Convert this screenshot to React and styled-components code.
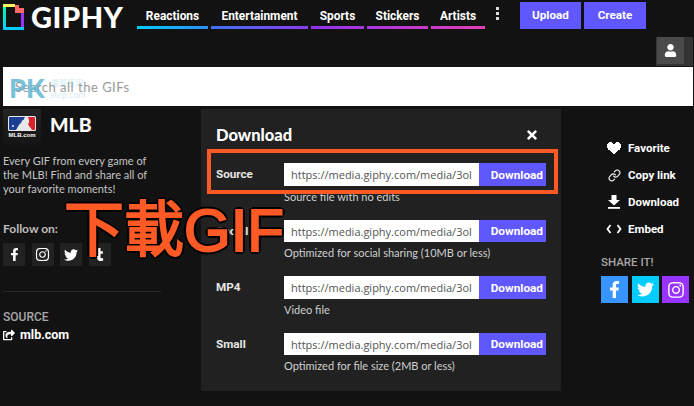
import styled, { createGlobalStyle } from "styled-components";
import { FaFacebookF, FaInstagram, FaTwitter, FaTumblr, FaUser, FaTimes, FaShareSquare } from "react-icons/fa";
import { Link as LinkIcon } from "lucide-react";

const GlobalStyle = createGlobalStyle`
  html, body {
    margin: 0;
    background: #121212;
  }
  * { box-sizing: border-box; }
`;

const navItems = [
  { label: "Reactions", width: 71, bar: "linear-gradient(90deg, #00ccff, #2f8cf5)" },
  { label: "Entertainment", width: 97, bar: "linear-gradient(90deg, #3f73f5, #8a3bf0)" },
  { label: "Sports", width: 53, bar: "linear-gradient(90deg, #8f35ee, #a935e0)" },
  { label: "Stickers", width: 61, bar: "linear-gradient(90deg, #a935e0, #c93acb)" },
  { label: "Artists", width: 54, bar: "linear-gradient(90deg, #c93acb, #e240ae)" },
];

const downloads = [
  { label: "Source", note: "Source file with no edits", height: 57, tall: true },
  { label: "Social", note: "Optimized for social sharing (10MB or less)", height: 56 },
  { label: "MP4", note: "Video file", height: 57, tall: true },
  { label: "Small", note: "Optimized for file size (2MB or less)", height: 56 },
];

const Logo = () => (
  <svg width="21" height="26" viewBox="0 0 21 26">
    <defs>
      <linearGradient id="logoLeft" x1="0" y1="0" x2="0" y2="1">
        <stop offset="0" stopColor="#00ff99" />
        <stop offset="1" stopColor="#00ccff" />
      </linearGradient>
    </defs>
    <rect x="0" y="0" width="3" height="26" fill="url(#logoLeft)" />
    <rect x="0" y="0" width="12" height="3" fill="#fff35c" />
    <rect x="0" y="23" width="21" height="3" fill="#00ccff" />
    <rect x="18" y="9" width="3" height="14" fill="#9933ff" />
    <path d="M12 1h4v3h5v5H12z" fill="#ff6666" />
  </svg>
);

const MlbBadge = () => (
  <svg width="28" height="15" viewBox="0 0 28 15">
    <rect width="28" height="15" rx="1.500" fill="#e8e8e8" />
    <path d="M1 2a1 1 0 0 1 1-1h15c-1 1-1 3-2 3-2 1-1 2-2 3-2 1-3 4-5 7H2a1 1 0 0 1-1-1z" fill="#1c3f94" />
    <path d="M20 1h6a1 1 0 0 1 1 1v11a1 1 0 0 1-1 1h-2c-1-2-4-5-4-6 1-1 2-2 0-7z" fill="#d8232f" />
    <circle cx="5" cy="10" r="0.900" fill="#fff" />
  </svg>
);

const PixelHeart = () => (
  <svg width="14" height="12" viewBox="0 0 14 12" fill="#fff">
    <path d="M2 0h3v1h1v1h2V1h1V0h3v1h1v1h1v4h-1v2h-2v1h-1v1H9v1H8v1H6v-1H5v-1H4V9H3V8H1V6H0V2h1V1h1z" />
  </svg>
);

const DownloadGlyph = () => (
  <svg width="14" height="14" viewBox="0 0 14 14" fill="#fff">
    <path d="M4.500 0h5v5H13L7 10.500 1 5h3.500z" />
    <rect x="1" y="12" width="12" height="1.800" />
  </svg>
);

const CodeGlyph = () => (
  <svg width="16" height="10" viewBox="0 0 16 10" fill="none" stroke="#fff" strokeWidth="1.800">
    <path d="M4.500 1 1.500 5l3 4M11.500 1l3 4-3 4" />
  </svg>
);

const App = () => (
  <Page>
    <GlobalStyle />
    <Header>
      <Brand>
        <Logo />
        <BrandName>GIPHY</BrandName>
      </Brand>
      <Nav>
        {navItems.map(item => (
          <NavItem key={item.label} $width={item.width} $bar={item.bar}>
            {item.label}
          </NavItem>
        ))}
        <NavItem $width={21} $bar="#e6479f">
          <Dots>
            <i />
            <i />
            <i />
          </Dots>
        </NavItem>
      </Nav>
      <HeaderButton $width={61}>Upload</HeaderButton>
      <HeaderButton $width={62}>Create</HeaderButton>
    </Header>

    <UserRow>
      <UserButton>
        <UserFace>
          <FaUser size={13} color="#fff" />
        </UserFace>
      </UserButton>
    </UserRow>

    <SearchBar>
      <SearchText>Search all the GIFs</SearchText>
      <Watermark>
        PK
        <WatermarkCjk>電腦應用</WatermarkCjk>
        <WatermarkSmall>step.com</WatermarkSmall>
      </Watermark>
    </SearchBar>

    <Body>
      <LeftColumn>
        <Channel>
          <Avatar>
            <MlbBadge />
            <AvatarText>MLB.com</AvatarText>
          </Avatar>
          <ChannelName>MLB</ChannelName>
        </Channel>
        <Description>
          Every GIF from every game of the MLB! Find and share all of your favorite moments!
        </Description>
        <FollowLabel>Follow on:</FollowLabel>
        <FollowRow>
          <FollowTile><FaFacebookF size={13} /></FollowTile>
          <FollowTile><FaInstagram size={15} /></FollowTile>
          <FollowTile><FaTwitter size={14} /></FollowTile>
          <FollowTile><FaTumblr size={13} /></FollowTile>
        </FollowRow>
        <Divider />
        <SourceLabel>SOURCE</SourceLabel>
        <SourceLink>
          <FaShareSquare size={12} />
          mlb.com
        </SourceLink>
      </LeftColumn>

      <Modal>
        <ModalHead>
          <ModalTitle>Download</ModalTitle>
          <FaTimes size={14} color="#fff" />
        </ModalHead>
        {downloads.map(row => (
          <DownloadRow key={row.label} $height={row.height}>
            <RowLabel>{row.label}</RowLabel>
            <UrlGroup $tall={row.tall}>
              <UrlText>https://media.giphy.com/media/3ol</UrlText>
              <UrlButton>Download</UrlButton>
            </UrlGroup>
            <RowNote>{row.note}</RowNote>
          </DownloadRow>
        ))}
        <Highlight />
      </Modal>

      <RightColumn>
        <ActionList>
          <Action><ActionIcon><PixelHeart /></ActionIcon>Favorite</Action>
          <Action><ActionIcon><LinkIcon size={13} strokeWidth={2} /></ActionIcon>Copy link</Action>
          <Action><ActionIcon><DownloadGlyph /></ActionIcon>Download</Action>
          <Action><ActionIcon><CodeGlyph /></ActionIcon>Embed</Action>
        </ActionList>
        <ShareLabel>SHARE IT!</ShareLabel>
        <ShareRow>
          <ShareTile $color="#3894ff"><FaFacebookF size={17} /></ShareTile>
          <ShareTile $color="#00ccff"><FaTwitter size={17} /></ShareTile>
          <ShareTile $color="#9933ff"><FaInstagram size={18} /></ShareTile>
        </ShareRow>
      </RightColumn>
    </Body>

    <BigCaption>下載GIF</BigCaption>
  </Page>
);

export default App;

const Page = styled.div`
  position: relative;
  width: 694px;
  height: 406px;
  padding: 2px 1px 0 3px;
  overflow: hidden;
  background: #121212;
  font-family: "Roboto", "Liberation Sans", sans-serif;
`;

const Header = styled.header`
  display: flex;
  align-items: flex-start;
  height: 35px;
`;

const Brand = styled.div`
  display: flex;
  align-items: flex-start;
  gap: 7px;
  width: 134px;
  height: 28px;
  padding-top: 2px;
`;

const BrandName = styled.div`
  color: #fff;
  font: 900 29px/26px "Lato", sans-serif;
  letter-spacing: 0.6px;
`;

const Nav = styled.nav`
  display: flex;
  gap: 3px;
  margin-right: 11px;
`;

const NavItem = styled.div`
  display: flex;
  align-items: center;
  justify-content: center;
  width: ${({ $width }) => $width}px;
  height: 27px;
  padding-top: 4px;
  border-bottom: 3px solid transparent;
  border-image: ${({ $bar }) => $bar} 1;
  color: #fff;
  font-size: 11.900px;
  font-weight: 700;
`;

const Dots = styled.div`
  display: flex;
  flex-direction: column;
  gap: 2px;
  margin: -5px 2px 0 0;

  i {
    width: 3px;
    height: 3px;
    background: #ddd;
  }
`;

const HeaderButton = styled.div`
  display: flex;
  align-items: center;
  justify-content: center;
  width: ${({ $width }) => $width}px;
  height: 27px;
  margin-right: 3px;
  padding-bottom: 2px;
  background: #6157ff;
  color: #fff;
  font-size: 11.700px;
  font-weight: 700;
`;

const UserRow = styled.div`
  display: flex;
  justify-content: flex-end;
  height: 30px;
`;

const UserButton = styled.div`
  width: 37px;
  height: 29px;
  padding-left: 1px;
  background: #333;
`;

const UserFace = styled.div`
  display: flex;
  align-items: center;
  justify-content: center;
  width: 27px;
  height: 27px;
  background: #4a4a4a;
`;

const SearchBar = styled.div`
  position: relative;
  display: flex;
  align-items: center;
  height: 39px;
  padding-left: 12px;
  background: #fff;
`;

const SearchText = styled.div`
  color: #9a9a9a;
  font: 400 13px "Lato", sans-serif;
  letter-spacing: 0.5px;
`;

const Watermark = styled.div`
  position: absolute;
  left: 6px;
  top: 7px;
  color: rgba(96, 184, 212, 0.85);
  font: 900 27px/27px "Lato", sans-serif;
`;

const WatermarkCjk = styled.span`
  position: absolute;
  left: 42px;
  top: 4px;
  color: rgba(96, 184, 212, 0.3);
  font: 400 8px/10px "Noto Sans CJK TC", sans-serif;
  white-space: nowrap;
`;

const WatermarkSmall = styled.span`
  position: absolute;
  left: 41px;
  top: 15px;
  color: rgba(96, 184, 212, 0.3);
  font: 400 9px/12px "Lato", sans-serif;
`;

const Body = styled.div`
  display: flex;
  padding-top: 3px;
`;

const LeftColumn = styled.aside`
  display: flex;
  flex-direction: column;
  width: 158px;
  margin-right: 40px;
  font-family: "Lato", sans-serif;
`;

const Channel = styled.div`
  display: flex;
  align-items: center;
  gap: 9px;
`;

const Avatar = styled.div`
  display: flex;
  flex-direction: column;
  align-items: center;
  gap: 1px;
  width: 38px;
  height: 37px;
  padding-top: 7px;
  border-radius: 2px;
  background: linear-gradient(#242424, #141414);
`;

const AvatarText = styled.div`
  color: #fff;
  font: 700 6px/7px "Liberation Sans", sans-serif;
`;

const ChannelName = styled.div`
  margin-top: -6px;
  color: #fff;
  font: 900 19.500px/20px "Lato", sans-serif;
`;

const Description = styled.p`
  width: 150px;
  margin: 8px 0 0;
  color: #c4c4c4;
  font-size: 11px;
  line-height: 14px;
`;

const FollowLabel = styled.div`
  margin-top: 25px;
  color: #bdbdbd;
  font-size: 12px;
  font-weight: 700;
  line-height: 16px;
`;

const FollowRow = styled.div`
  display: flex;
  gap: 6.500px;
  margin-top: 6px;
`;

const FollowTile = styled.div`
  display: flex;
  align-items: center;
  justify-content: center;
  width: 22px;
  height: 23px;
  background: #222;
  color: #fff;
`;

const Divider = styled.div`
  height: 1px;
  margin-top: 25px;
  background: #2a2a2a;
`;

const SourceLabel = styled.div`
  margin-top: 18px;
  color: #a6a6a6;
  font: 500 12px/14px "Roboto", sans-serif;
`;

const SourceLink = styled.div`
  display: flex;
  align-items: center;
  gap: 5px;
  margin-top: 3px;
  color: #fff;
  font: 700 12.500px/16px "Roboto", sans-serif;
`;

const Modal = styled.section`
  position: relative;
  width: 360px;
  height: 282px;
  padding: 0 15px;
  background: #212121;
`;

const ModalHead = styled.div`
  display: flex;
  align-items: center;
  justify-content: space-between;
  height: 54px;
  padding: 0 7px 2px 0;
`;

const ModalTitle = styled.h2`
  margin: 0;
  color: #fff;
  font: 900 16.500px/18px "Lato", sans-serif;
`;

const DownloadRow = styled.div`
  display: grid;
  grid-template-columns: 68px 262px;
  align-content: start;
  height: ${({ $height }) => $height}px;
`;

const RowLabel = styled.div`
  align-self: center;
  margin-top: -1px;
  color: #e6e6e6;
  font: 700 11.700px/14px "Roboto", sans-serif;
`;

const UrlGroup = styled.div`
  display: flex;
  height: ${({ $tall }) => ($tall ? 23 : 22)}px;
`;

const UrlText = styled.div`
  flex: 1;
  display: flex;
  align-items: center;
  padding-left: 7px;
  overflow: hidden;
  background: #fff;
  color: #555;
  font: 400 11px "Open Sans", sans-serif;
  white-space: nowrap;
`;

const UrlButton = styled.div`
  display: flex;
  align-items: center;
  justify-content: flex-end;
  width: 67px;
  padding-right: 3px;
  background: #6157ff;
  color: #fff;
  font: 700 11.800px "Roboto", sans-serif;
`;

const RowNote = styled.div`
  grid-column: 2;
  margin-top: 4px;
  color: #d0d0d0;
  font: 400 11px/14px "Lato", sans-serif;
`;

const Highlight = styled.div`
  position: absolute;
  left: 6px;
  top: 40px;
  width: 351px;
  height: 45px;
  border: 4px solid #ff5a26;
`;

const RightColumn = styled.aside`
  display: flex;
  flex-direction: column;
  margin-left: 40px;
`;

const ActionList = styled.div`
  display: flex;
  flex-direction: column;
  gap: 11px;
  margin-top: 31px;
`;

const Action = styled.div`
  display: flex;
  align-items: center;
  height: 16px;
  color: #fff;
  font-size: 11.500px;
  font-weight: 700;
`;

const ActionIcon = styled.span`
  display: flex;
  align-items: center;
  justify-content: center;
  width: 20px;
  margin: 0 4px 0 3px;
  color: #fff;
`;

const ShareLabel = styled.div`
  margin-top: 18px;
  color: #a6a6a6;
  font-size: 11.500px;
  font-weight: 500;
  line-height: 14px;
`;

const ShareRow = styled.div`
  display: flex;
  gap: 4px;
  margin-top: 7px;

  & > :last-child {
    margin-left: -1px;
  }
`;

const ShareTile = styled.div`
  display: flex;
  align-items: center;
  justify-content: center;
  width: 27px;
  height: 27px;
  background: ${({ $color }) => $color};
  color: #fff;
`;

const BigCaption = styled.div`
  position: absolute;
  left: 64px;
  top: 193px;
  color: #ff5a26;
  font: 400 60px/76px "Liberation Sans", "Noto Sans CJK TC", sans-serif;
  white-space: nowrap;
  -webkit-text-stroke: 2px #ff5a26;
  text-shadow:
    3px 0 0 #000, -3px 0 0 #000, 0 3px 0 #000, 0 -3px 0 #000,
    2px 2px 0 #000, -2px 2px 0 #000, 2px -2px 0 #000, -2px -2px 0 #000;
`;
